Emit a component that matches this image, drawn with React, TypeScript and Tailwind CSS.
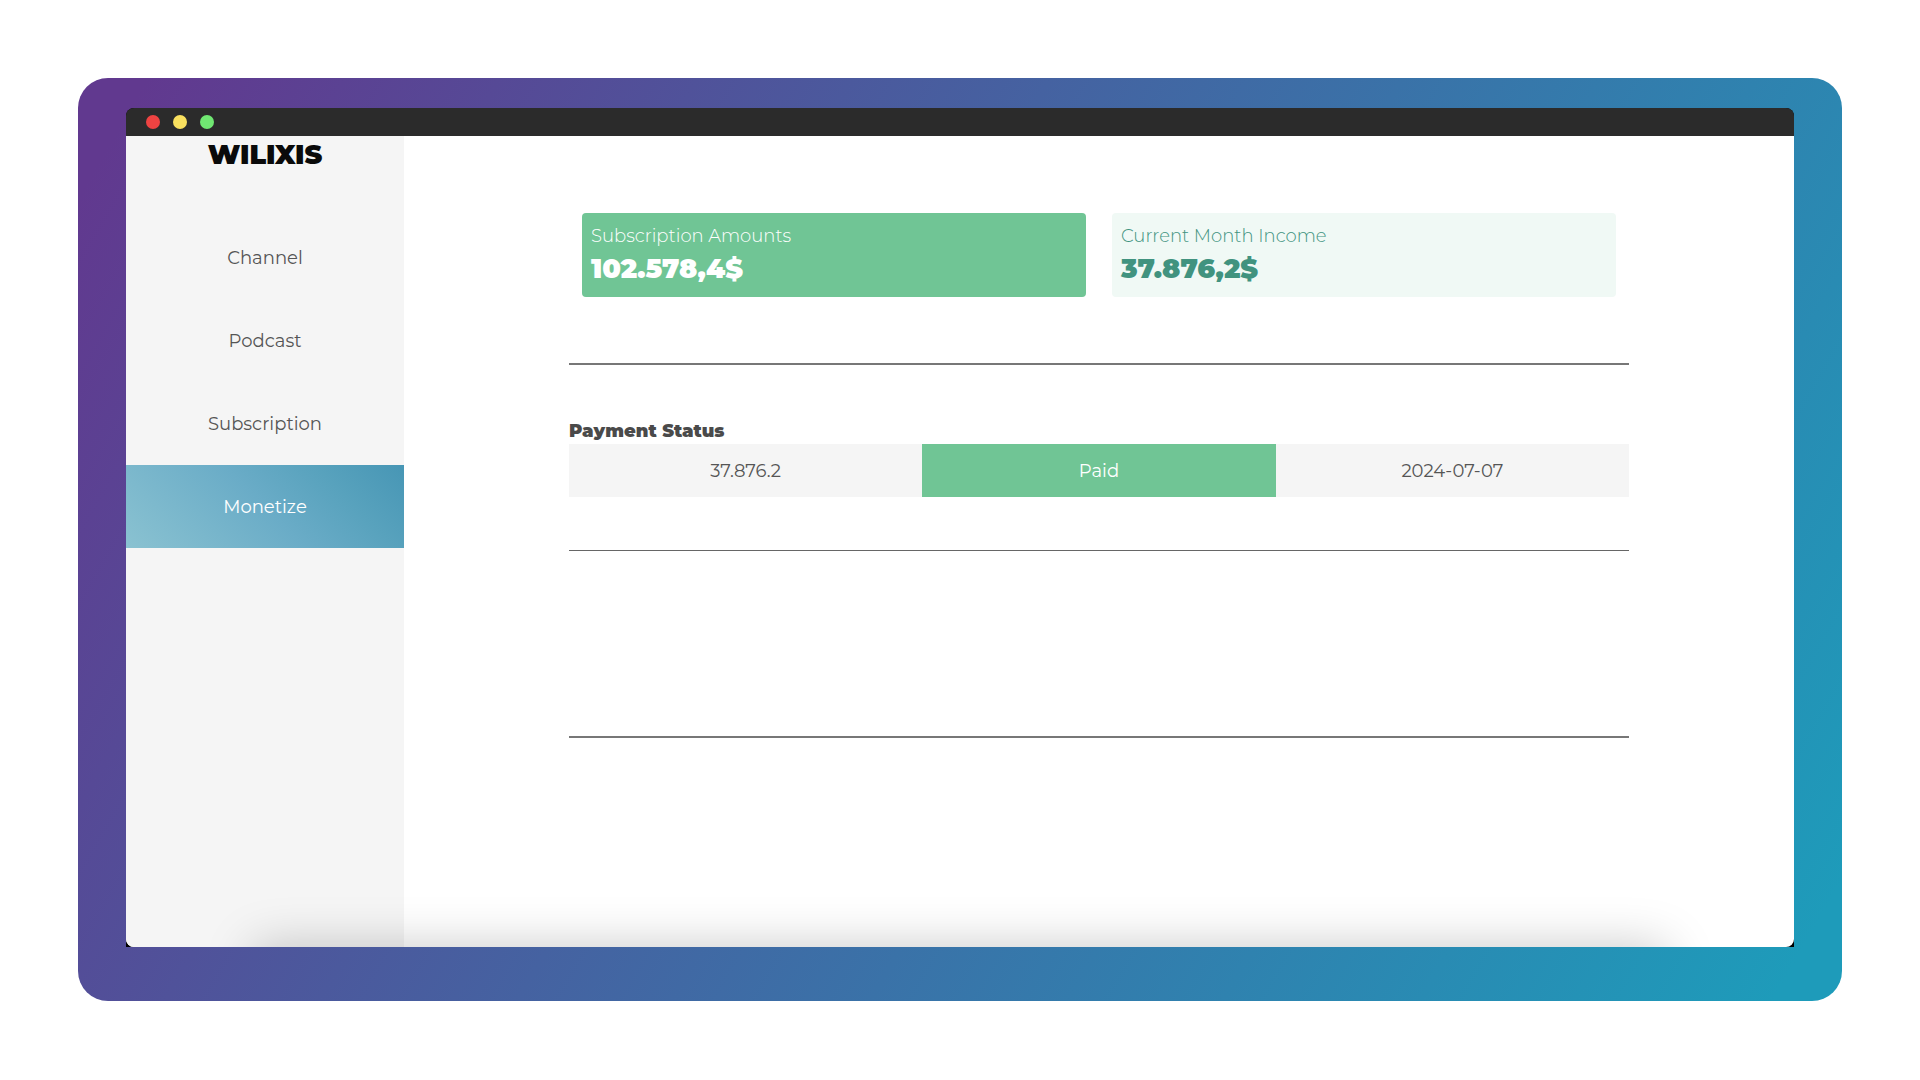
import { useState } from 'react';

const menu = ['Channel', 'Podcast', 'Subscription', 'Monetize'];

const payments = [
  { amount: '37.876.2', status: 'Paid', date: '2024-07-07' },
];

function TitleBar() {
  return (
    <div className="h-7 shrink-0 rounded-t-lg bg-[#2b2b2b] px-5 flex items-center gap-[13px]">
      <span className="size-[14px] rounded-full bg-[#ee4342]" />
      <span className="size-[14px] rounded-full bg-[#f9e05f]" />
      <span className="size-[14px] rounded-full bg-[#70e772]" />
    </div>
  );
}

function Sidebar() {
  const [active, setActive] = useState('Monetize');

  return (
    <aside className="w-1/6 bg-[#f5f5f5]">
      <h1 className="h-20 pt-1 text-center text-[27px] leading-[30px] font-black text-[#0a0a0a]">WILIXIS</h1>
      <nav className="flex flex-col">
        {menu.map(item => (
          <a
            key={item}
            href={`#${item.toLowerCase()}`}
            onClick={() => setActive(item)}
            className={`h-[83px] flex items-center justify-center text-lg ${active === item ? 'bg-[linear-gradient(45deg,#8ac2d1,#6aacc7_50%,#58a2bd_75%,#4796b5)] text-white' : 'text-[#555555]'}`}
          >
            {item}
          </a>
        ))}
      </nav>
    </aside>
  );
}

function AmountCard({ label, amount, className }: { label: string; amount: string; className: string }) {
  return (
    <div className={`flex-1 h-[84px] rounded px-[9px] pt-2 ${className}`}>
      <p className="text-lg leading-[30px] font-light">{label}</p>
      <p className="text-[27px] leading-9 font-black">{amount}</p>
    </div>
  );
}

export default function App() {
  return (
    <div className="min-h-screen flex bg-white px-[78px] pt-[78px] pb-[79px] font-['Montserrat','Inter',sans-serif]">
      <div className="flex-1 flex rounded-[30px] bg-[linear-gradient(120deg,#61398f_3%,#1e9bba_97%)] px-12 pt-[30px] pb-[54px]">
        <div className="flex-1 flex flex-col rounded-t-lg bg-black">
          <TitleBar />
          <div className="relative flex-1 flex overflow-hidden rounded-b-lg bg-white">
            <Sidebar />
            <main className="flex-1 px-[165px] pt-[77px]">
              <section className="flex gap-[26px] px-[13px]">
                <AmountCard label="Subscription Amounts" amount="102.578,4$" className="bg-[#70c595] text-white" />
                <AmountCard label="Current Month Income" amount="37.876,2$" className="bg-[#f0f9f5] text-[#41937f]" />
              </section>

              <hr className="mt-[66px] border-t-2 border-[#777777]" />

              <section className="pt-[53px]">
                <h2 className="text-lg leading-[26px] font-black text-[#4a4a4a]">Payment Status</h2>
                <table className="w-full table-fixed text-lg">
                  <tbody>
                    {payments.map(p => (
                      <tr key={p.date} className="h-[53px] text-center text-[#555555]">
                        <td className="bg-[#f5f5f5]">{p.amount}</td>
                        <td className="bg-[#70c595] text-white">{p.status}</td>
                        <td className="bg-[#f5f5f5]">{p.date}</td>
                      </tr>
                    ))}
                  </tbody>
                </table>
              </section>

              <hr className="mt-[53px] border-[#666666]" />
              <hr className="mt-[185px] border-t-2 border-[#777777]" />
            </main>
            {/* soft shadow rising from the bottom edge */}
            <div className="pointer-events-none absolute inset-x-32 top-full h-20 shadow-[0_0_50px_rgba(0,0,0,0.22)]" />
          </div>
        </div>
      </div>
    </div>
  );
}
